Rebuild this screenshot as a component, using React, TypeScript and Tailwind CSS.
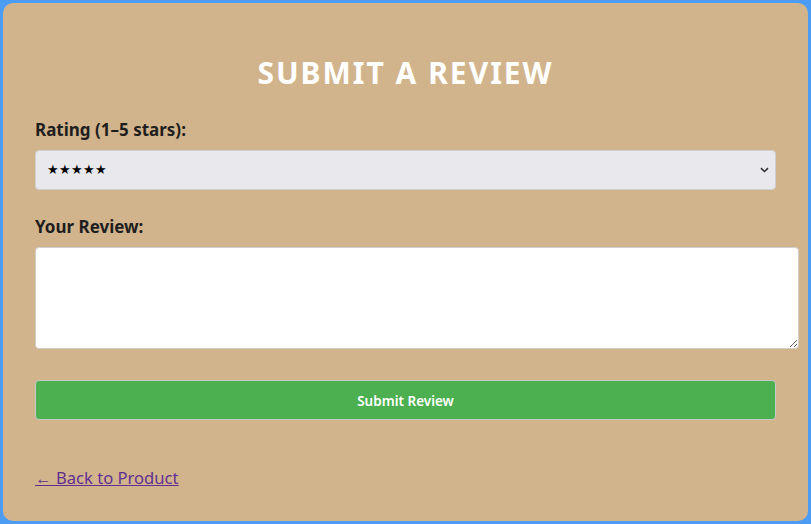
export default function App() {
  return (
    <div
      className="h-[524px] w-[811px] bg-[#4d9cf4] p-[3px]"
      style={{ fontFamily: '"Noto Sans", "Open Sans", sans-serif' }}
    >
      <div className="flex h-full flex-col rounded-[10px] bg-[#d2b48c] px-[32px] pt-[50px]">
        <h2 className="text-center text-[30px] leading-[40px] font-bold tracking-[2px] text-white">
          SUBMIT A REVIEW
        </h2>

        <label className="mt-[25px] text-[17px] leading-[23px] font-bold text-[#1e1e1e]">
          Rating (1–5 stars):
        </label>
        <div className="relative mt-[9px]">
          <select className="h-[40px] w-full appearance-none rounded-[4px] border border-[#cfcfcf] bg-[#e9e8ed] px-[11px] text-[12.5px] text-black">
            <option>★★★★★</option>
            <option>★★★★</option>
            <option>★★★</option>
            <option>★★</option>
            <option>★</option>
          </select>
          <svg
            className="pointer-events-none absolute top-[17px] right-[7px]"
            width="9"
            height="6"
            viewBox="0 0 9 6"
          >
            <path d="M1 1.2 L4.5 4.5 L8 1.2" fill="none" stroke="#333" strokeWidth="1.6" />
          </svg>
        </div>

        <label className="mt-[25px] text-[17px] leading-[23px] font-bold text-[#1e1e1e]">
          Your Review:
        </label>
        <textarea className="mt-[9px] box-content h-[80px] w-full rounded-[4px] border border-[#cfcfcf] bg-white py-[10px] pr-[11px] pl-[10px]" />

        <button className="mt-[31px] h-[40px] w-full rounded-[4px] border border-[#c8c8c8] bg-[#4caf50] pt-[2px] text-[13.5px] font-semibold text-white">
          Submit Review
        </button>

        <a
          href="#"
          className="mt-[46px] self-start text-[16.6px] leading-[23px] text-[#5f2f91] underline"
        >
          ← Back to Product
        </a>
      </div>
    </div>
  );
}
